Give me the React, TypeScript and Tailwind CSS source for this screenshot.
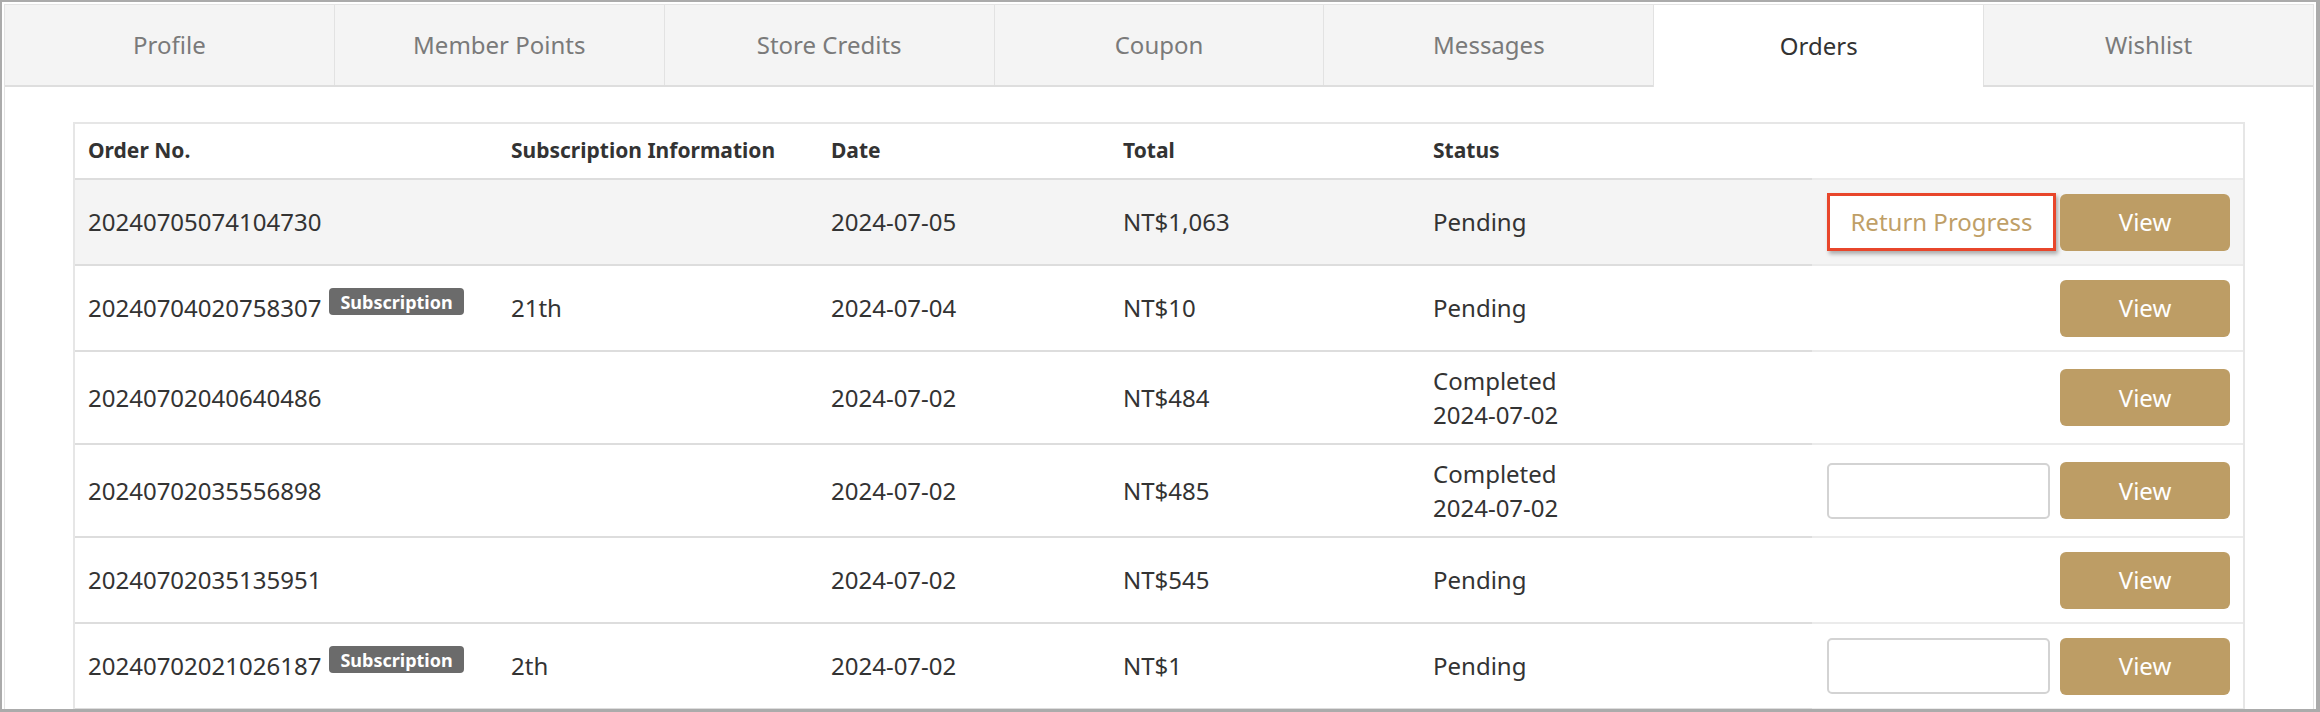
import React from "react";

type Order = {
  no: string;
  subscription?: string;
  date: string;
  total: string;
  status: string[];
  action?: "return" | "input";
  active?: boolean;
};

const tabs = ["Profile", "Member Points", "Store Credits", "Coupon", "Messages", "Orders", "Wishlist"];

const orders: Order[] = [
  { no: "20240705074104730", date: "2024-07-05", total: "NT$1,063", status: ["Pending"], action: "return", active: true },
  { no: "20240704020758307", subscription: "21th", date: "2024-07-04", total: "NT$10", status: ["Pending"] },
  { no: "20240702040640486", date: "2024-07-02", total: "NT$484", status: ["Completed", "2024-07-02"] },
  { no: "20240702035556898", date: "2024-07-02", total: "NT$485", status: ["Completed", "2024-07-02"], action: "input" },
  { no: "20240702035135951", date: "2024-07-02", total: "NT$545", status: ["Pending"] },
  { no: "20240702021026187", subscription: "2th", date: "2024-07-02", total: "NT$1", status: ["Pending"], action: "input" },
];

const cols = "grid grid-cols-[423px_320px_292px_310px_392px_431px]";
const cell = "flex items-center pl-[13px] border-b-2 border-[#dddddd]";

const Badge = () => (
  <span className="ml-[8px] mb-[13px] inline-flex h-[27px] items-center rounded-[4px] bg-[#6b6b6b] px-[11px] text-[18px] font-bold leading-none text-white">
    Subscription
  </span>
);

const Actions = ({ order }: { order: Order }) => (
  <div className="flex items-center justify-end border-b-2 border-[#ebebeb] pr-[13px]">
    {order.action === "return" && (
      <button className="mr-[4px] flex h-[58px] w-[229px] items-center justify-center border-[3px] border-[#e8462b] bg-white text-[24px] text-[#bf9f67] shadow-[2px_3px_4px_rgba(0,0,0,0.3)]">
        Return Progress
      </button>
    )}
    {order.action === "input" && (
      <input className="mr-[10px] h-[56px] w-[223px] rounded-[5px] border-2 border-[#d3d3d3] bg-white px-3 text-[24px] outline-none" />
    )}
    <button className="flex h-[57px] w-[170px] items-center justify-center rounded-[6px] bg-[#bd9d65] text-[24px] text-white">
      View
    </button>
  </div>
);

export default function App() {
  return (
    <div
      className="h-[712px] w-[2320px] overflow-hidden border-b-[3px] border-l-2 border-r-4 border-t-2 border-[#ababab] bg-white px-[2px] pt-[2px] text-[#333333]"
      style={{ fontFamily: '"Noto Sans", "Open Sans", sans-serif' }}
    >
      <div className="h-full border-l border-r border-t border-[#e4e4e4]">
        {/* tab strip */}
        <div className="flex h-[82px] border-b-2 border-[#dedede]">
          {tabs.map((t, i) => {
            const on = t === "Orders";
            return (
              <div
                key={t}
                className={
                  "flex flex-1 items-center justify-center text-[24px] " +
                  (i > 0 ? "border-l border-[#e2e2e2] " : "") +
                  (on ? "-mb-[2px] h-[82px] bg-white text-[#333333]" : "bg-[#f4f4f4] text-[#7a7a7a]")
                }
              >
                {t}
              </div>
            );
          })}
        </div>

        {/* orders table */}
        <div className="px-[68px] pt-[35px]">
          <div className="border-l-2 border-r-2 border-t-2 border-[#e6e6e6]">
            <div className={cols + " h-[56px] text-[21px] font-bold"}>
              <div className={cell}>Order No.</div>
              <div className={cell}>Subscription Information</div>
              <div className={cell}>Date</div>
              <div className={cell}>Total</div>
              <div className={cell}>Status</div>
              <div className="border-b-2 border-[#ebebeb]" />
            </div>
            {orders.map((o) => (
              <div
                key={o.no}
                className={
                  cols +
                  " text-[24px] " +
                  (o.status.length > 1 ? "h-[93px] " : "h-[86px] ") +
                  (o.active ? "bg-[#f4f4f4]" : "bg-white")
                }
              >
                <div className={cell}>
                  <span>{o.no}</span>
                  {o.subscription && <Badge />}
                </div>
                <div className={cell}>{o.subscription ?? ""}</div>
                <div className={cell}>{o.date}</div>
                <div className={cell}>{o.total}</div>
                <div className={cell + " leading-[1.4]"}>
                  <div>
                    {o.status.map((s) => (
                      <div key={s}>{s}</div>
                    ))}
                  </div>
                </div>
                <Actions order={o} />
              </div>
            ))}
          </div>
        </div>
      </div>
    </div>
  );
}
